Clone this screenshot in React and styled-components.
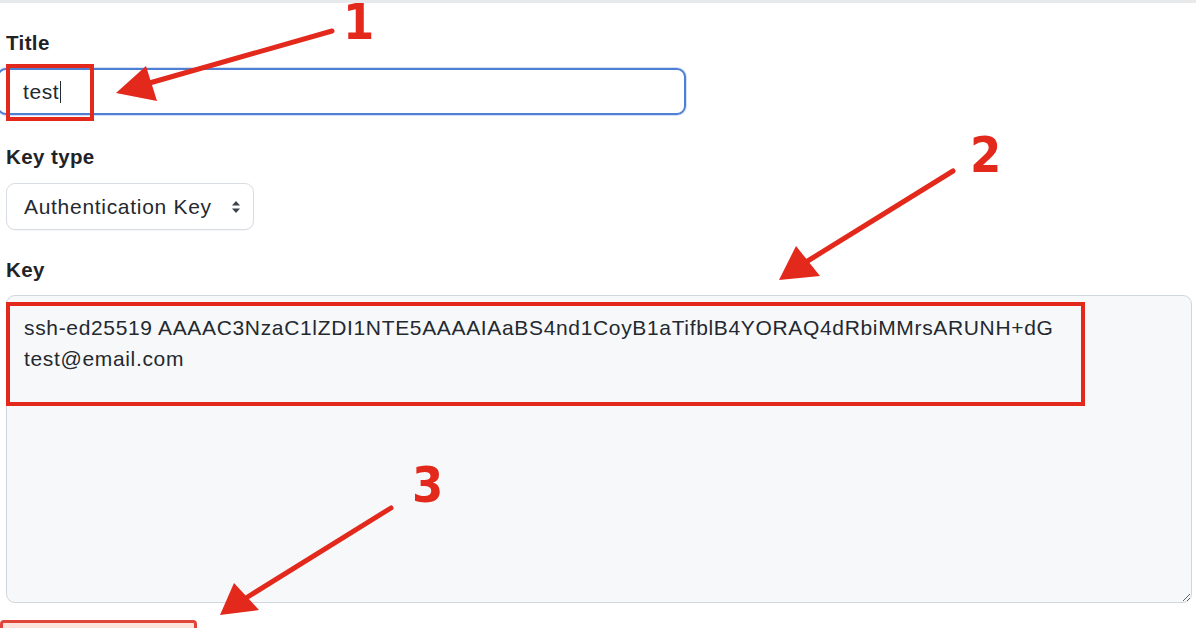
import styled, { createGlobalStyle } from "styled-components";

const GlobalStyle = createGlobalStyle`
  html, body {
    margin: 0;
    padding: 0;
    background: #ffffff;
  }
  body {
    font-family: "Liberation Sans", "Noto Sans", Arial, sans-serif;
    color: #1f2328;
  }
`;

const Page = styled.div`
  position: relative;
  width: 1196px;
  height: 628px;
  overflow: hidden;
  background: #ffffff;
`;

const Divider = styled.div`
  height: 3px;
  background: #e8e9eb;
`;

const Form = styled.div`
  padding: 28px 4px 0 6px;
  display: flex;
  flex-direction: column;
  align-items: flex-start;
`;

const Label = styled.div`
  font-size: 20.5px;
  font-weight: 700;
  line-height: 24px;
  letter-spacing: 0.4px;
  color: #1f2328;
  margin-top: ${(p) => p.$top || 0}px;
  margin-bottom: 13px;
`;

const Field = styled.div`
  box-sizing: border-box;
  margin-left: -9px;
  width: 689px;
  height: 47px;
  border: 2px solid #4f7fd3;
  border-radius: 9px;
  box-shadow: 0 0 0 1px rgba(84, 140, 230, 0.25);
  display: flex;
  align-items: center;
  padding-left: 24px;
  font-size: 21px;
  letter-spacing: 0.6px;
  color: #24292f;
`;

const Caret = styled.span`
  display: inline-block;
  width: 1px;
  height: 22px;
  margin-left: 1px;
  background: #24292f;
`;

const Select = styled.div`
  box-sizing: border-box;
  margin-top: 1px;
  width: 248px;
  height: 47px;
  border: 1px solid #d8dde3;
  border-radius: 9px;
  box-shadow: 0 1px 0 rgba(31, 35, 40, 0.04);
  display: flex;
  align-items: center;
  justify-content: space-between;
  padding: 0 12px 0 17px;
  font-size: 21px;
  letter-spacing: 0.7px;
  color: #24292f;
`;

const KeyArea = styled.textarea`
  box-sizing: border-box;
  width: 1186px;
  height: 308px;
  margin: 0;
  padding: 16px 17px;
  background: #f6f8fa;
  border: 1px solid #d0d7de;
  border-radius: 9px;
  font-family: "Liberation Sans", "Noto Sans", Arial, sans-serif;
  font-size: 21px;
  letter-spacing: 0.66px;
  line-height: 31px;
  color: #24292f;
  resize: both;
  outline: none;
  overflow: hidden;
`;

const SubmitButton = styled.div`
  box-sizing: border-box;
  margin: 17px 0 0 -6px;
  width: 197px;
  height: 44px;
  border: 3px solid #e0453a;
  border-radius: 4px;
  background: #fbe3dc;
`;

const Overlay = styled.svg`
  position: absolute;
  inset: 0;
  pointer-events: none;
`;

const Num = styled.text`
  font-family: "Liberation Sans Narrow", "DejaVu Sans Condensed", "Liberation Sans", sans-serif;
  font-weight: 700;
  font-size: 50px;
  fill: #e3281c;
`;

const RED = "#e3281c";

const SortIcon = () => (
  <svg width="10" height="14" viewBox="0 0 10 14">
    <path d="M5 1 L9 5.5 H1 Z" fill="#3d4248" />
    <path d="M5 13 L9 8.5 H1 Z" fill="#3d4248" />
  </svg>
);

const Annotations = () => (
  <Overlay width="1196" height="628" viewBox="0 0 1196 628">
    {/* boxes */}
    <rect x="8" y="66" width="84" height="53" fill="none" stroke={RED} strokeWidth="4" />
    <rect x="8" y="304" width="1075" height="100" fill="none" stroke={RED} strokeWidth="4" />

    {/* arrow 1 */}
    <line x1="332" y1="31" x2="146" y2="84" stroke={RED} strokeWidth="5" strokeLinecap="round" />
    <path d="M116 93 L146 66 L157 101 Z" fill={RED} />
    <Num x="343" y="39">1</Num>

    {/* arrow 2 */}
    <line x1="953" y1="171" x2="806" y2="262" stroke={RED} strokeWidth="5" strokeLinecap="round" />
    <path d="M779 280 L796 246 L820 276 Z" fill={RED} />
    <Num x="970" y="172">2</Num>

    {/* arrow 3 */}
    <line x1="391" y1="508" x2="246" y2="598" stroke={RED} strokeWidth="5" strokeLinecap="round" />
    <path d="M220 615 L234 583 L259 610 Z" fill={RED} />
    <Num x="412" y="502">3</Num>
  </Overlay>
);

const App = () => {
  return (
    <Page>
      <GlobalStyle />
      <Divider />
      <Form>
        <Label>Title</Label>
        <Field>
          test
          <Caret />
        </Field>

        <Label $top={30}>Key type</Label>
        <Select>
          <span>Authentication Key</span>
          <SortIcon />
        </Select>

        <Label $top={28}>Key</Label>
        <KeyArea
          readOnly
          defaultValue={
            "ssh-ed25519 AAAAC3NzaC1lZDI1NTE5AAAAIAaBS4nd1CoyB1aTifblB4YORAQ4dRbiMMrsARUNH+dG\ntest@email.com"
          }
        />

        <SubmitButton />
      </Form>
      <Annotations />
    </Page>
  );
};

export default App;
